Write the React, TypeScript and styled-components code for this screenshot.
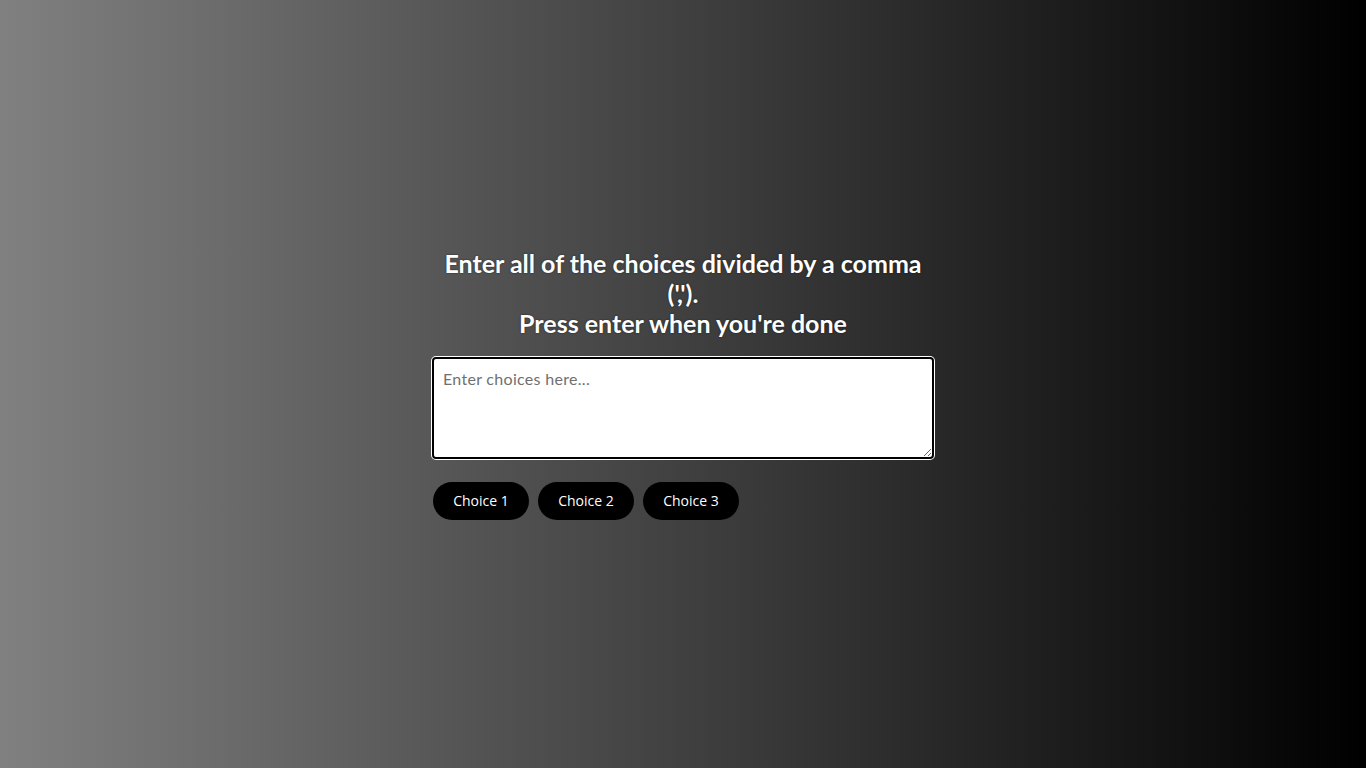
import React, { useState } from "react";
import styled, { createGlobalStyle } from "styled-components";

const GlobalStyle = createGlobalStyle`
  html, body {
    margin: 0;
    height: 100%;
  }
  body {
    font-family: "Lato", "Open Sans", sans-serif;
    background: linear-gradient(to right, #808080, #000000);
  }
  #root {
    height: 100%;
  }
`;

const Page = styled.div`
  height: 100vh;
  display: flex;
  align-items: center;
  justify-content: center;
`;

const Panel = styled.div`
  width: 502px;
  display: flex;
  flex-direction: column;
`;

const Heading = styled.h3`
  margin: 0 0 19px;
  padding: 0 10px;
  color: #fff;
  font-size: 25px;
  font-weight: 700;
  line-height: 30px;
  text-align: center;
  text-shadow: 0 0 2px rgba(0, 0, 0, 0.6);
`;

const ChoicesInput = styled.textarea`
  box-sizing: border-box;
  width: 100%;
  height: 102px;
  padding: 10px 9px;
  border: 2px solid #000;
  border-radius: 4px;
  box-shadow: 0 0 0 1px #fff;
  font-family: "Lato", "Open Sans", sans-serif;
  font-size: 16px;
  letter-spacing: 0.3px;
  color: #222;
  outline: none;
  resize: vertical;

  &::placeholder {
    color: #707070;
  }
`;

const Tags = styled.div`
  display: flex;
  flex-wrap: wrap;
  gap: 9px;
  margin-top: 23px;
  padding-left: 1px;
`;

const Tag = styled.span`
  display: inline-flex;
  align-items: center;
  justify-content: center;
  width: 96px;
  height: 38px;
  padding-bottom: 2px;
  box-sizing: border-box;
  border-radius: 19px;
  background: #000;
  color: #fff;
  font-family: "Open Sans", "Noto Sans", sans-serif;
  font-size: 14px;
`;

const App = () => {
  const [choices] = useState(["Choice 1", "Choice 2", "Choice 3"]);

  return (
    <>
      <GlobalStyle />
      <Page>
        <Panel>
          <Heading>
            Enter all of the choices divided by a comma (',').
            <br />
            Press enter when you're done
          </Heading>
          <ChoicesInput placeholder="Enter choices here..." />
          <Tags>
            {choices.map((choice, index) => (
              <Tag key={index}>{choice}</Tag>
            ))}
          </Tags>
        </Panel>
      </Page>
    </>
  );
};

export default App;
